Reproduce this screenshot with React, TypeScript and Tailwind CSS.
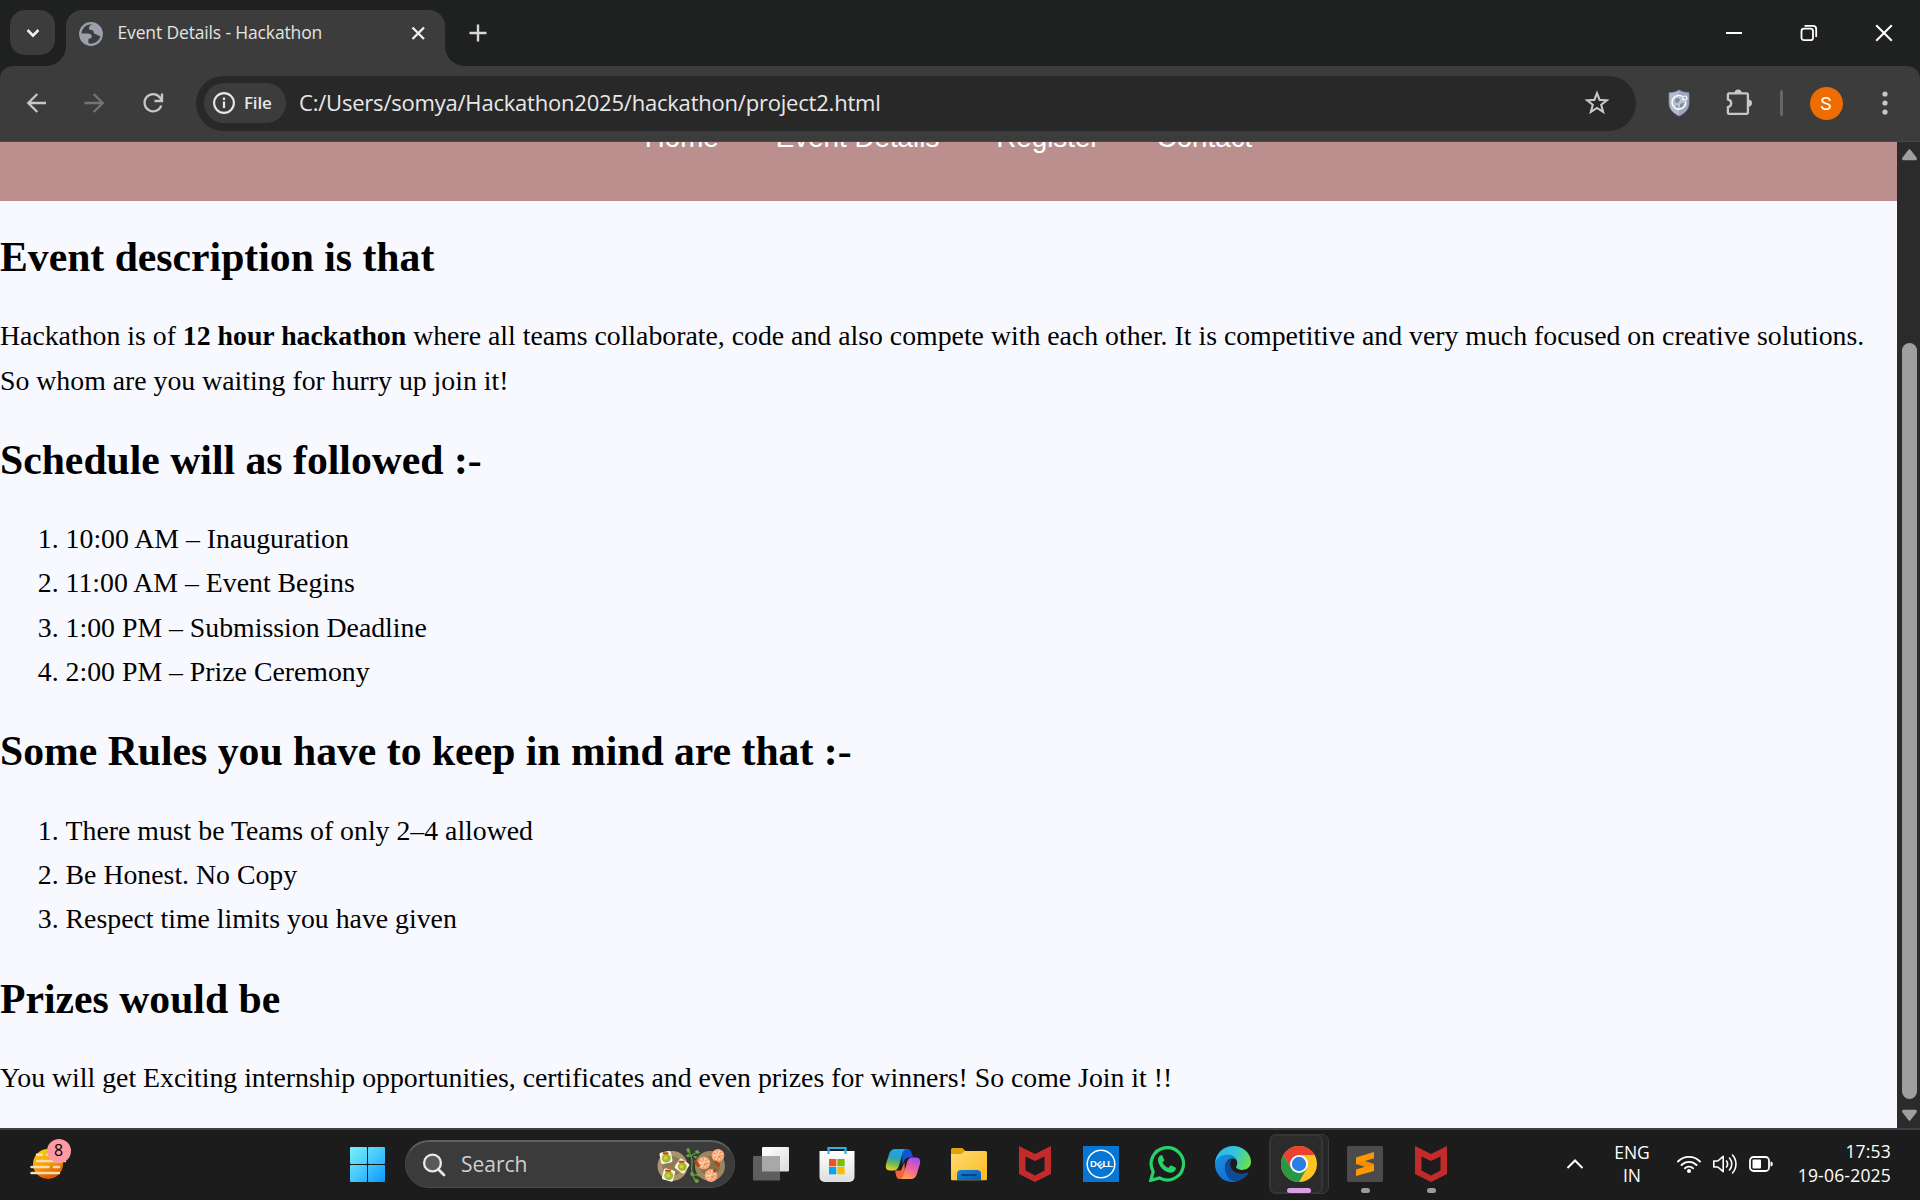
import React from "react";

const ui = "font-['Open_Sans','Noto_Sans',sans-serif]";

const navLinks = ["Home", "Event Details", "Register", "Contact"];
const schedule = [
  "10:00 AM – Inauguration",
  "11:00 AM – Event Begins",
  "1:00 PM – Submission Deadline",
  "2:00 PM – Prize Ceremony",
];
const rules = [
  "There must be Teams of only 2–4 allowed",
  "Be Honest. No Copy",
  "Respect time limits you have given",
];

function Svg({ w, h, className = "", children }: { w: number; h: number; className?: string; children: React.ReactNode }) {
  return (
    <svg width={w} height={h} viewBox={`0 0 ${w} ${h}`} fill="none" className={`block shrink-0 ${className}`}>
      {children}
    </svg>
  );
}

function TabStrip() {
  return (
    <div className="flex h-[66px] items-start bg-[#1f2120]">
      <div className="ml-[10px] mt-[10px] flex size-[45px] items-center justify-center rounded-[15px] bg-[#3c3c3c]">
        <Svg w={16} h={12}>
          <path d="M2.6 3 8 8.6 13.4 3" stroke="#f1f1f1" strokeWidth="2.6" />
        </Svg>
      </div>
      <div className="relative ml-[11px] mt-[10px] flex h-[56px] w-[379px] items-start rounded-t-[16px] bg-[#3c3c3c]">
        <Svg w={20} h={20} className="absolute -left-[20px] bottom-0">
          <path d="M20 0V20H0C11 20 20 11 20 0Z" fill="#3c3c3c" />
        </Svg>
        <Svg w={20} h={20} className="absolute -right-[20px] bottom-0">
          <path d="M0 0V20H20C9 20 0 11 0 0Z" fill="#3c3c3c" />
        </Svg>
        <Svg w={24} h={24} className="ml-[13px] mt-[11.5px]">
          <circle cx="12" cy="12" r="10.8" stroke="#9aa0a9" strokeWidth="2.2" />
          <path d="M14 1.5C12 3 10 3.5 10 6.200c0 2 2 1.600 3.600 2 1 .3.8 1.800 1.200 2.800.6 1.400 3 1 4 2.200 1 1.200 2.200.5 3.700.3C23.500 7 20 2.500 14 1.500Z" fill="#9aa0a9" />
          <path d="M1.500 11.500h7.500c2 0 3.800 1 3.800 3 0 1.400-1 2-2.200 2-1.200.1-1.200 1-1.200 2.200 0 1.200.2 2.200-.2 3.500C4.500 21 1.500 17 1.500 11.500Z" fill="#9aa0a9" />
        </Svg>
        <div className={`${ui} ml-[14.5px] mt-[7px] h-[30px] w-[270px] whitespace-nowrap text-[17.5px] leading-[30px] tracking-[-0.15px] text-[#e3e3e3]`}>
          Event Details - Hackathon
        </div>
        <Svg w={16} h={16} className="ml-[22.5px] mt-[15px]">
          <path d="M2.500 2.500 14 14M14 2.500 2.500 14" stroke="#f0f0f0" strokeWidth="2.3" />
        </Svg>
      </div>
      <Svg w={18} h={18} className="ml-[24px] mt-[24px]">
        <path d="M9 .5v17M.5 9h17" stroke="#d8d8d8" strokeWidth="2.4" />
      </Svg>
      <div className="ml-auto mr-[27px] mt-[24px] flex">
        <Svg w={18} h={18} className="mr-[57px]">
          <path d="M1 9h16" stroke="#fff" strokeWidth="2" />
        </Svg>
        <Svg w={18} h={18} className="mr-[57px]">
          <rect x="1.500" y="4.700" width="11.500" height="11.500" rx="2.500" stroke="#fff" strokeWidth="1.800" />
          <path d="M4.500 1.800h8.500a3.200 3.200 0 0 1 3.200 3.200v8" stroke="#fff" strokeWidth="1.800" />
        </Svg>
        <Svg w={18} h={18}>
          <path d="m1.200 1.200 15.600 15.600M16.800 1.200 1.200 16.800" stroke="#fff" strokeWidth="2" />
        </Svg>
      </div>
    </div>
  );
}

function Toolbar() {
  return (
    <div className="relative z-10 bg-[#1f2120]">
      <div className="flex h-[76px] items-center rounded-t-[13px] border-b border-[#484848] bg-[#3c3c3c] pb-[1px]">
        <Svg w={22} h={22} className="ml-[26px]">
          <path d="M20 11H2.500M11.300 2 2.300 11l9 9" stroke="#c7c7c7" strokeWidth="2.3" />
        </Svg>
        <Svg w={22} h={22} className="ml-[35px]">
          <path d="M1.500 11H19.500M10.700 2l9 9-9 9" stroke="#757575" strokeWidth="2.3" />
        </Svg>
        <Svg w={24} h={24} className="ml-[36px]">
          <path d="M20.300 14.500A8.600 8.600 0 1 1 18.700 6.200L20.500 9" stroke="#c7c7c7" strokeWidth="2.300" />
          <path d="M21 2.500V10H13.500" stroke="#c7c7c7" strokeWidth="2.300" />
        </Svg>
        <div className="ml-[31px] flex h-[55px] w-[1440px] items-center rounded-full bg-[#282828]">
          <div className="ml-[8px] flex h-[40px] w-[82px] items-center rounded-full bg-[#3c3c3c]">
            <Svg w={22} h={22} className="ml-[9px]">
              <circle cx="11" cy="11" r="9.900" stroke="#e6e6e6" strokeWidth="2.100" />
              <path d="M11 9.600v6.400M11 5.600v2.400" stroke="#e6e6e6" strokeWidth="2.200" />
            </Svg>
            <span className={`${ui} -mt-[2px] ml-[9px] text-[17px] font-semibold leading-none tracking-[-0.2px] text-[#e6e6e6]`}>File</span>
          </div>
          <span className={`${ui} -mt-[2px] ml-[13px] whitespace-nowrap text-[22px] leading-none tracking-[-0.21px] text-[#e8e8e8]`}>
            C:/Users/somya/Hackathon2025/hackathon/project2.html
          </span>
          <Svg w={26} h={26} className="ml-auto mr-[26px]">
            <path d="M13 3.200 15.600 9.900 22.800 10.300 17.200 14.800 19.100 21.800 13 17.900 6.900 21.800 8.800 14.800 3.200 10.300 10.400 9.900Z" stroke="#c7c7c7" strokeWidth="2.100" />
          </Svg>
        </div>
        <Svg w={22} h={28} className="ml-[32px]">
          <path d="M11 1C8 3 4.500 3.700 1 3.700V14c0 6.500 4.500 10.500 10 13 5.500-2.500 10-6.500 10-13V3.700C17.500 3.700 14 3 11 1Z" fill="#b3bccf" stroke="#76839f" strokeWidth=".8" />
          <path d="M11 1v26c5.500-2.500 10-6.500 10-13V3.700C17.500 3.700 14 3 11 1Z" fill="#8f9ab3" opacity=".6" />
          <circle cx="11" cy="13.500" r="6" fill="#b9c2d2" />
          <path d="M7 10l3-1 2 1-1 3-2 1-2-1zM12 15l4-1.500-1 4-3 1zM8 16l2 1v2l-2-1z" fill="#7f8ca6" />
          <path d="M17.700 12.300A6.900 6.900 0 1 1 14.500 7.500" stroke="#fff" strokeWidth="1.400" />
          <circle cx="16.800" cy="9" r="2" stroke="#fff" strokeWidth="1.200" />
        </Svg>
        <Svg w={28} h={28} className="ml-[35px]">
          <path d="M2.900 4.400h19a1 1 0 0 1 1 1v18.400a1 1 0 0 1-1 1H3.900a1 1 0 0 1-1-1v-5.600c2.200-.6 3.300-1.800 3.300-3.900 0-2.100-1.100-3.300-3.300-3.900V5.400a1 1 0 0 1 1-1" stroke="#c7c7c7" strokeWidth="2.300" />
          <path d="M9.500 4a3.600 3.600 0 0 1 7.200 0zM23.300 10.400a3.700 3.700 0 0 1 0 7.400z" fill="#c7c7c7" />
        </Svg>
        <div className="ml-[27px] h-[26px] w-[3px] rounded-full bg-[#666]" />
        <div className="ml-[26.5px] flex size-[33px] items-center justify-center rounded-full bg-[#ef6c00] font-[Roboto,sans-serif] text-[19px] leading-none text-white">
          S
        </div>
        <Svg w={6} h={24} className="ml-[39.500px]">
          <circle cx="3" cy="3" r="2.600" fill="#c7c7c7" />
          <circle cx="3" cy="12" r="2.600" fill="#c7c7c7" />
          <circle cx="3" cy="21" r="2.600" fill="#c7c7c7" />
        </Svg>
      </div>
    </div>
  );
}

function Heading({ children }: { children: React.ReactNode }) {
  return <h2 className="my-[34.8px] text-[41.7px] font-bold leading-[44.4px]">{children}</h2>;
}

function NumberedList({ items }: { items: string[] }) {
  return (
    <ol className="list-decimal pl-[65.6px]">
      {items.map((t) => (
        <li key={t}>{t}</li>
      ))}
    </ol>
  );
}

function Page() {
  return (
    <div className="flex h-[986px]">
      <div className="h-full w-[1897px] overflow-hidden bg-[#f8f8ff] font-['Liberation_Serif',serif] text-[27.79px] leading-[44.4px] text-black">
        <div className="-mb-[0.8px] h-[59px] overflow-hidden bg-[#bc8f8f]">
          <nav className="-mt-[26.5px] flex justify-center gap-[57px] font-['Liberation_Sans',sans-serif] text-[27.75px] text-white">
            {navLinks.map((t) => (
              <span key={t}>{t}</span>
            ))}
          </nav>
        </div>
        <Heading>Event description is that</Heading>
        <p>
          Hackathon is of <b>12 hour hackathon</b> where all teams collaborate, code and also compete with each other. It is
          competitive and very much focused on creative solutions. So whom are you waiting for hurry up join it!
        </p>
        <Heading>Schedule will as followed :-</Heading>
        <NumberedList items={schedule} />
        <Heading>Some Rules you have to keep in mind are that :-</Heading>
        <NumberedList items={rules} />
        <Heading>Prizes would be</Heading>
        <p>You will get Exciting internship opportunities, certificates and even prizes for winners! So come Join it !!</p>
      </div>
      <div className="flex w-[23px] flex-col items-center bg-[#2b2b2b] pl-[2px]">
        <Svg w={15} h={12} className="mt-[7px]">
          <path d="M6.300 1Q7.500-.7 8.700 1L14.500 8.500Q15.500 11.300 13.500 11.300H1.500Q-.5 11.300 .5 8.500Z" fill="#9f9f9f" />
        </Svg>
        <div className="mt-[182px] h-[756px] w-[15px] rounded-full bg-[#9f9f9f]" />
        <Svg w={15} h={12} className="mt-[10px]">
          <path d="M6.300 11Q7.500 12.700 8.700 11L14.500 3.500Q15.500 .7 13.500 .7H1.500Q-.5 .7 .5 3.500Z" fill="#9f9f9f" />
        </Svg>
      </div>
    </div>
  );
}

function WeatherIcon() {
  return (
    <div className="relative ml-[29px] h-[44px] w-[44px]">
      <Svg w={44} h={44}>
        <defs>
          <linearGradient id="sun" x1="0" y1="0" x2=".4" y2="1">
            <stop stopColor="#ffd60a" />
            <stop offset=".6" stopColor="#f79a09" />
            <stop offset="1" stopColor="#e25a05" />
          </linearGradient>
        </defs>
        <circle cx="19" cy="22" r="15" fill="url(#sun)" />
        <g stroke="#f3dfae" strokeWidth="2.500" strokeLinecap="round">
          <path d="M8 12.700h5M18 12.700h3M8 19h28M2.500 25h17M25 25h5M2.500 31h27.500" />
        </g>
      </Svg>
      <div className={`${ui} absolute -top-[3.5px] left-[17.500px] flex size-[24px] items-center justify-center rounded-full bg-[#ff99a4] pb-[1px] text-[16px] leading-none text-black`}>
        8
      </div>
    </div>
  );
}

function WindowsIcon() {
  return (
    <Svg w={36} h={36}>
      <defs>
        <linearGradient id="win" gradientUnits="userSpaceOnUse" x1="0" y1="0" x2="36" y2="36">
          <stop stopColor="#7df2fb" />
          <stop offset=".5" stopColor="#46c8fb" />
          <stop offset="1" stopColor="#0a94ff" />
        </linearGradient>
      </defs>
      <g fill="url(#win)">
        <rect x="0" y="1" width="17" height="17" rx="1" />
        <rect x="18" y="1" width="17" height="17" rx="1" />
        <rect x="0" y="19" width="17" height="17" rx="1" />
        <rect x="18" y="19" width="17" height="17" rx="1" />
      </g>
    </Svg>
  );
}

function Shrimp({ x, y }: { x: number; y: number }) {
  return (
    <g transform={`translate(${x} ${y})`}>
      <circle r="6.200" fill="#ffcda8" />
      <path d="M-1.500-1-5.500-3.200M-.5-2-1-6M1-1.500 4.300-4.200M2 0 6 1M-1.500 1-5 3.200M0 2-.5 6M1.500 1.500 4 4.500" stroke="#f4945c" strokeWidth="1.300" />
      <circle r="5.600" stroke="#fba26c" strokeWidth="1.200" />
      <circle cx="1" cy="1" r="1" fill="#b08a62" />
    </g>
  );
}

function Olive({ x, y, r = 0 }: { x: number; y: number; r?: number }) {
  return (
    <g transform={`translate(${x} ${y})`}>
      <rect x="-5.800" y="-5.800" width="11.600" height="11.600" rx="2" fill="#fbf3df" transform={`rotate(${r})`} />
      <circle cx=".3" cy=".6" r="4.500" fill="#a9b82a" />
      <circle cx="-.5" cy=".5" r="1.800" fill="#cdd650" />
      <path d="M-2.500-4.300h4" stroke="#c8411c" strokeWidth="2" strokeLinecap="round" />
    </g>
  );
}

function FoodArt() {
  return (
    <Svg w={70} h={38}>
      <circle cx="15.500" cy="20" r="15" fill="#a8946f" />
      <circle cx="15.500" cy="20" r="10" fill="#8f7b5a" />
      <circle cx="53" cy="20" r="15" fill="#9a8663" />
      <circle cx="53" cy="20" r="10" fill="#85714f" />
      <Olive x={9} y={11.5} r={-12} />
      <Olive x={25} y={20} r={35} />
      <Olive x={11.5} y={29} r={15} />
      <path d="M31 3c2 6 5 9 4 15s-1 11 4 17M34 10l6-4M35 29l5 0" stroke="#5a9d35" strokeWidth="1.300" />
      <path d="M29 3l3-1 1 3-2 2zM38 5l3-1 2 3-3 1zM29 9l3-1 1 3-3 0zM36 10l4 0-1 3zM33 27l3-1 1 3-3 1zM39 28l4 0-1 3zM37 34l4-1 1 3-3 1z" fill="#66ab3a" />
      <Shrimp x={61} y={9.5} />
      <Shrimp x={47} y={17} />
      <Shrimp x={54} y={29.5} />
      <path d="m38.500 15.500 3 4M58.500 16l3 3M58 24l-.5 1" stroke="#b5461a" strokeWidth="3" strokeLinecap="round" />
    </Svg>
  );
}

function TaskViewIcon() {
  return (
    <Svg w={36} h={36}>
      <defs>
        <linearGradient id="tv" x1="0" y1="0" x2="1" y2="1">
          <stop stopColor="#fff" />
          <stop offset="1" stopColor="#dcdcdc" />
        </linearGradient>
      </defs>
      <rect x="9" y="1" width="27" height="24.500" rx="1.200" fill="url(#tv)" />
      <rect x="0" y="10" width="27" height="24.500" rx="1.200" fill="#5e5e5e" />
      <path d="M9 10h17a1 1 0 0 1 1 1v14.500H9Z" fill="#a8a8a8" />
    </Svg>
  );
}

function StoreIcon() {
  return (
    <Svg w={36} h={36}>
      <defs>
        <linearGradient id="bag" x1="0" y1="0" x2="0" y2="1">
          <stop stopColor="#fff" />
          <stop offset="1" stopColor="#dedede" />
        </linearGradient>
      </defs>
      <path d="M.5 5h35v26a5 5 0 0 1-5 5h-25a5 5 0 0 1-5-5Z" fill="url(#bag)" />
      <path d="M9.500 8V2h17v6" stroke="#2bb3e6" strokeWidth="2.200" />
      <rect x="10" y="13" width="7.300" height="7.300" fill="#f05125" />
      <rect x="18.300" y="13" width="7.300" height="7.300" fill="#7fb900" />
      <rect x="10" y="21" width="7.300" height="7.300" fill="#05a4ef" />
      <rect x="18.300" y="21" width="7.300" height="7.300" fill="#ffb901" />
    </Svg>
  );
}

function CopilotIcon() {
  return (
    <Svg w={36} h={36}>
      <defs>
        <linearGradient id="cpa" x1=".5" y1="0" x2=".3" y2="1">
          <stop stopColor="#19a9f2" />
          <stop offset=".4" stopColor="#2f9fc0" />
          <stop offset=".7" stopColor="#6fbb52" />
          <stop offset="1" stopColor="#f5d020" />
        </linearGradient>
        <linearGradient id="cpb" x1=".7" y1="0" x2=".3" y2="1">
          <stop stopColor="#a14df0" />
          <stop offset=".45" stopColor="#ee5fa2" />
          <stop offset="1" stopColor="#ffa34f" />
        </linearGradient>
        <linearGradient id="cpc" x1="0" y1="0" x2="1" y2="1">
          <stop stopColor="#0b5cd8" />
          <stop offset="1" stopColor="#1c48c8" />
        </linearGradient>
      </defs>
      <path d="M17 3h5c3 0 4 1.500 5 5l1 3.500h-4c-3 0-4.500 1.500-5.500 5l-1 3Z" fill="url(#cpc)" />
      <path d="M10 24.500h6l3.500-8 .5 12c-1.500 3.500-3 4.500-6 4.500-3-.5-3-5-4-8.500Z" fill="#f0653c" />
      <path d="M10.500 3H22c-3 0-4 2-5 6l-3 10.500c-1.200 4-3 5-6.500 5H5c-4 0-4.800-3-3.800-7L4 8.500C5.200 4.500 7 3 10.500 3Z" fill="url(#cpa)" />
      <path d="M25.500 33H14c3 0 4-2 5-6l3-10.500c1.200-4 3-5 6.500-5H31c4 0 4.800 3 3.800 7L32 27.500C30.800 31.500 29 33 25.500 33Z" fill="url(#cpb)" />
    </Svg>
  );
}

function ExplorerIcon() {
  return (
    <Svg w={36} h={36}>
      <defs>
        <linearGradient id="fold" x1="0" y1="0" x2="1" y2="1">
          <stop stopColor="#ffdb72" />
          <stop offset="1" stopColor="#fbb922" />
        </linearGradient>
        <linearGradient id="foldb" x1="0" y1="0" x2="1" y2="1">
          <stop stopColor="#1683d8" />
          <stop offset="1" stopColor="#0b5cab" />
        </linearGradient>
      </defs>
      <path d="M0 3.500A1.500 1.500 0 0 1 1.500 2h10L15 5.500V10H0Z" fill="#e3a008" />
      <path d="M0 8h10l4-3h20.500A1.500 1.500 0 0 1 36 6.500V33a1.200 1.200 0 0 1-1.200 1.200H1.200A1.200 1.200 0 0 1 0 33Z" fill="url(#fold)" />
      <path d="M6 34.200V28a4 4 0 0 1 4-4h16a4 4 0 0 1 4 4v6.200Z" fill="url(#foldb)" />
      <path d="M11 29h14" stroke="#0a4684" strokeWidth="1.800" strokeLinecap="round" />
    </Svg>
  );
}

function McAfeeIcon() {
  return (
    <Svg w={36} h={36}>
      <path fillRule="evenodd" d="M2 0 18 8 34 0V28L18 36 2 28ZM8.500 10.500V24.500L18 29.500 27.500 24.500V10.500L18 15Z" fill="#c32b2b" />
    </Svg>
  );
}

function DellIcon() {
  const letter = { fill: "#fff", fontFamily: "Liberation Sans, sans-serif", fontWeight: "bold", fontSize: 9.5 };
  return (
    <Svg w={36} h={36}>
      <rect width="36" height="36" fill="#0676d4" />
      <circle cx="18" cy="18" r="13.800" stroke="#fff" strokeWidth="1.500" />
      <text x="7" y="21.400" {...letter}>D</text>
      <text x="13.800" y="22.700" transform="rotate(-38 17 18.500)" {...letter}>E</text>
      <text x="19.500" y="21.400" {...letter}>L</text>
      <text x="24.200" y="21.400" {...letter}>L</text>
    </Svg>
  );
}

function WhatsAppIcon() {
  return (
    <Svg w={36} h={36}>
      <path d="M1.800 34.300 4.200 25.700A16.200 16.200 0 1 1 10.400 31.900Z" stroke="#25d366" strokeWidth="3.200" />
      <path d="M11.200 9.600c.8-.6 2-.5 2.400.4l1.500 3.400c.3.700.1 1.200-.4 1.800l-1.200 1.400c1.300 2.500 3.200 4.200 5.900 5.400l1.600-1.900c.5-.6 1-.7 1.700-.4l3.300 1.600c.9.400 1 .8.800 1.800-.5 2.200-2.600 3.700-4.800 3.600C15.500 26.500 9 19.500 9 13.900c0-1.700 1-3.400 2.200-4.300Z" fill="#25d366" />
    </Svg>
  );
}

function EdgeIcon() {
  return (
    <Svg w={36} h={36}>
      <defs>
        <linearGradient id="ea" x1="0" y1=".3" x2="1" y2=".6">
          <stop stopColor="#2bb8f0" />
          <stop offset=".5" stopColor="#35c4dc" />
          <stop offset="1" stopColor="#6be04a" />
        </linearGradient>
        <linearGradient id="eb" x1="0" y1="0" x2=".7" y2="1">
          <stop stopColor="#1a94dc" />
          <stop offset="1" stopColor="#0a6cd0" />
        </linearGradient>
      </defs>
      <path d="M0 18C0 8 8 0 18 0s18 7.500 18 15.500c0 5.500-4 8.500-8.500 8.500-4 0-6.500-1.500-6.500-3 0-1 1.200-1.500 1.200-4 0-4-4-7-9-7C7 10 2 13 0 18Z" fill="url(#ea)" />
      <path d="M0 18c.5-5.500 6-9.500 12-9.500 6 0 10.200 3.500 10.200 8 0-2-2-4-5-4-4 0-7 4-7 9C10.200 29 16 34 22 35.500 10 38.500 0 29.500 0 18Z" fill="url(#eb)" />
      <path d="M17.200 13c-4 1-7 4-7 9C10.200 29.500 15 35.500 22 35.500c5-1.500 9-4.500 11.300-8.500.4-.7-.2-1-.8-.7-1.500.7-3.500 1.200-5.500 1.200-6.500 0-11.500-4-11.500-9 0-2.500.8-4.500 1.700-5.500Z" fill="#114a94" />
      <path d="M17 13.500c3-1 5.200 1 5.200 3.500 0 2.500-1.200 3-1.200 4 0 1.500 2.500 3 6.500 3 2.500 0 5-.7 6.500-2.500l-1 4.500c-1.500.8-4 1.500-6 1.500-6.500 0-11.500-4-11.500-9 0-2.500.5-4 1.500-5Z" fill="#1c1c1c" />
    </Svg>
  );
}

function ChromeIcon() {
  return (
    <Svg w={36} h={36}>
      <circle cx="18" cy="18" r="18" fill="#ffc421" />
      <path d="M2.400 9A18 18 0 0 1 33.600 9H18L10.200 22.500Z" fill="#ea4132" />
      <path d="M2.400 9A18 18 0 0 0 18 36L25.800 22.500 10.200 22.500Z" fill="#2a9746" />
      <circle cx="18" cy="18" r="9" fill="#fff" />
      <circle cx="18" cy="18" r="7.200" fill="#2b7de9" />
    </Svg>
  );
}

function SublimeIcon() {
  return (
    <Svg w={36} h={36}>
      <rect width="36" height="36" rx="2" fill="#4b4b4b" />
      <path d="M9 11.500 27 6v6.200L18 15l9 3v7L9 30v-6.500l9-2.800-9-2.700Z" fill="#ff9800" />
      <path d="m18 15 9 3v1.500l-9 1.200L9 18v-.5Z" fill="#e88400" opacity=".5" />
    </Svg>
  );
}

function Dot() {
  return <div className="absolute left-[28.500px] top-[59px] h-[5px] w-[9px] rounded-full bg-[#9b9b9b]" />;
}

function Slot({ children }: { children: React.ReactNode }) {
  return <div className="relative flex h-[70px] w-[66px] items-center justify-center">{children}</div>;
}

function Taskbar() {
  return (
    <div className="flex h-[72px] items-center overflow-hidden border-t-2 border-[#414141] bg-[#1c1c1c] pb-[2px]">
      <WeatherIcon />
      <div className="ml-[277px]">
        <WindowsIcon />
      </div>
      <div className="ml-[19px] flex h-[48px] w-[330px] items-center rounded-full border border-t-2 border-[#484848] border-t-[#5f5f5f] bg-[#3b3b3b]">
        <Svg w={24} h={24} className="ml-[16px]">
          <circle cx="10.500" cy="10" r="8.400" fill="#595959" stroke="#e6e9ee" strokeWidth="2.300" />
          <path d="m16.500 16.500 5.500 5.500" stroke="#e6e9ee" strokeWidth="2.800" strokeLinecap="round" />
        </Svg>
        <span className={`${ui} ml-[15px] text-[21px] leading-none text-[#cfcfcf]`}>Search</span>
        <div className="ml-auto mr-[7px]">
          <FoodArt />
        </div>
      </div>
      <div className="ml-[3px] flex">
        <Slot><TaskViewIcon /></Slot>
        <Slot><StoreIcon /></Slot>
        <Slot><CopilotIcon /></Slot>
        <Slot><ExplorerIcon /></Slot>
        <Slot><McAfeeIcon /></Slot>
        <Slot><DellIcon /></Slot>
        <Slot><WhatsAppIcon /></Slot>
        <Slot><EdgeIcon /></Slot>
        <Slot>
          <div className="absolute left-[10px] top-[5px] h-[60px] w-[53px] rounded-[7px] border border-[#3a3a3a] bg-[#272727]" />
          <div className="absolute left-[3px] top-[5px] h-[60px] w-[54px] rounded-[7px] border-2 border-[#363636] bg-[#2b2b2b]" />
          <div className="relative">
            <ChromeIcon />
          </div>
          <div className="absolute left-[21px] top-[59px] h-[5px] w-[24px] rounded-full bg-[#d9a0e6]" />
        </Slot>
        <Slot><SublimeIcon /><Dot /></Slot>
        <Slot><McAfeeIcon /><Dot /></Slot>
      </div>
      <div className={`${ui} ml-auto mr-[29px] flex h-full items-center text-[17.500px] leading-[24px] text-white`}>
        <Svg w={18} h={12}>
          <path d="M1.500 10 9 2.500 16.500 10" stroke="#fff" strokeWidth="2" />
        </Svg>
        <div className="mt-[0px] ml-[30px] w-[36px] whitespace-nowrap text-center leading-[23.500px]">
          ENG
          <br />
          IN
        </div>
        <Svg w={26} h={20} className="ml-[26px]">
          <g stroke="#fff" strokeWidth="1.900" strokeLinecap="round">
            <path d="M2 7.500a15.500 15.500 0 0 1 22 0M5.500 11a10.600 10.600 0 0 1 15 0M9 14.300a5.700 5.700 0 0 1 8 0" />
          </g>
          <circle cx="13" cy="17" r="2" fill="#fff" />
        </Svg>
        <Svg w={26} h={22} className="ml-[10px]">
          <g stroke="#fff" strokeWidth="1.600" strokeLinecap="round" strokeLinejoin="round">
            <path d="M1.800 8v6h4l5.400 4.700V3.300L5.800 8ZM14.500 8a5 5 0 0 1 0 6M17.500 5a9 9 0 0 1 0 12M20.500 2a13.500 13.500 0 0 1 0 18" />
          </g>
        </Svg>
        <Svg w={26} h={18} className="ml-[10px]">
          <rect x="2" y="2" width="19" height="14" rx="3.500" stroke="#fff" strokeWidth="1.800" />
          <rect x="4.500" y="4.500" width="8.500" height="9" rx="1" fill="#fff" />
          <path d="M22.500 6.500c3 0 3 5 0 5Z" fill="#fff" />
        </Svg>
        <div className="-mt-[2px] ml-[22px] w-[95px] whitespace-nowrap text-right tracking-[0.2px]">
          17:53
          <br />
          19-06-2025
        </div>
      </div>
    </div>
  );
}

export default function App() {
  return (
    <div className="flex h-[1200px] w-[1920px] flex-col overflow-hidden bg-[#1f2120]">
      <TabStrip />
      <Toolbar />
      <Page />
      <Taskbar />
    </div>
  );
}
